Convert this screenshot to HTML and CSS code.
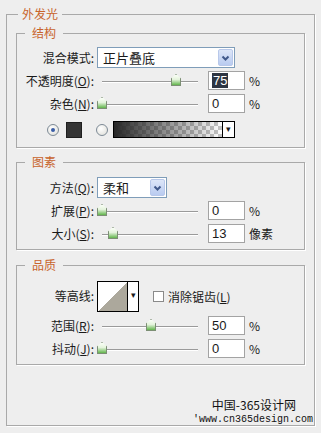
FILE: index.html
```html
<!DOCTYPE html>
<html lang="zh">
<head>
    <meta charset="UTF-8">
    <meta name="viewport" content="width=device-width, initial-scale=1.0">
    <title>外发光</title>
    <link rel="stylesheet" href="styles.css">
</head>
<body>
    <section class="outer">
        <h2 class="title">外发光</h2>

        <div class="group group-struct">
            <h3 class="title">结构</h3>
            <div class="row">
                <span class="label">混合模式:</span>
                <div class="select select-wide">
                    <span class="select-text">正片叠底</span>
                    <span class="select-btn">
                        <svg width="13" height="16" viewBox="0 0 13 16"><path d="M3.5 6.5 L6.5 9.5 L9.5 6.5" fill="none" stroke="#41598a" stroke-width="2"/></svg>
                    </span>
                </div>
            </div>
            <div class="row">
                <span class="label">不透明度(<u>O</u>):</span>
                <div class="slider">
                    <span class="track"></span>
                    <span class="thumb" style="left: 74px"></span>
                </div>
                <div class="num"><span class="sel">75</span></div>
                <span class="unit">%</span>
            </div>
            <div class="row">
                <span class="label">杂色(<u>N</u>):</span>
                <div class="slider">
                    <span class="track"></span>
                    <span class="thumb" style="left: 0px"></span>
                </div>
                <div class="num">0</div>
                <span class="unit">%</span>
            </div>
            <div class="row row-color">
                <span class="radio on"></span>
                <span class="swatch"></span>
                <span class="radio"></span>
                <div class="gradbox">
                    <span class="grad"></span>
                    <span class="drop">&#9662;</span>
                </div>
            </div>
        </div>

        <div class="group group-elem">
            <h3 class="title">图素</h3>
            <div class="row">
                <span class="label">方法(<u>Q</u>):</span>
                <div class="select select-short">
                    <span class="select-text">柔和</span>
                    <span class="select-btn">
                        <svg width="13" height="16" viewBox="0 0 13 16"><path d="M3.5 6.5 L6.5 9.5 L9.5 6.5" fill="none" stroke="#41598a" stroke-width="2"/></svg>
                    </span>
                </div>
            </div>
            <div class="row">
                <span class="label">扩展(<u>P</u>):</span>
                <div class="slider">
                    <span class="track"></span>
                    <span class="thumb" style="left: 0px"></span>
                </div>
                <div class="num">0</div>
                <span class="unit">%</span>
            </div>
            <div class="row">
                <span class="label">大小(<u>S</u>):</span>
                <div class="slider">
                    <span class="track"></span>
                    <span class="thumb" style="left: 11px"></span>
                </div>
                <div class="num">13</div>
                <span class="unit">像素</span>
            </div>
        </div>

        <div class="group group-quality">
            <h3 class="title">品质</h3>
            <div class="row row-contour">
                <span class="label">等高线:</span>
                <div class="contour">
                    <span class="curve"></span>
                    <span class="drop">&#9662;</span>
                </div>
                <span class="check"></span>
                <span class="check-text">消除锯齿(<u>L</u>)</span>
            </div>
            <div class="row row-gap">
                <span class="label">范围(<u>R</u>):</span>
                <div class="slider">
                    <span class="track"></span>
                    <span class="thumb" style="left: 49px"></span>
                </div>
                <div class="num">50</div>
                <span class="unit">%</span>
            </div>
            <div class="row">
                <span class="label">抖动(<u>J</u>):</span>
                <div class="slider">
                    <span class="track"></span>
                    <span class="thumb" style="left: 0px"></span>
                </div>
                <div class="num">0</div>
                <span class="unit">%</span>
            </div>
        </div>

        <div class="mark">
            <div class="mark-cn">中国-365设计网</div>
            <div class="mark-url">'www.cn365design.com</div>
        </div>
    </section>
</body>
</html>
```

FILE: styles.css
```css
body {
    margin: 0;
    background: #eeeeee;
    font-family: "Noto Sans CJK SC", sans-serif;
    font-size: 12px;
    color: #1a1a1a;
    width: 321px;
    height: 433px;
    overflow: hidden;
}

/* group boxes with the caption sitting on the top border */
.outer,
.group {
    border: 1px solid #a9a9a9;
    box-shadow: 1px 1px 0 #ffffff;
}

.outer {
    margin: 14px 6px 0;
    padding: 0 9px 0 11px;
}

.title {
    width: fit-content;
    margin: -8px 0 0;
    background: #eeeeee;
    color: #c8642c;
    font-size: 12px;
    font-weight: normal;
    line-height: 14px;
}

.outer > .title {
    padding: 0 4px;
}

.group > .title {
    padding: 0 7px;
}

.group {
    margin-left: -2px;
    padding-left: 8px;
}

.group-struct {
    margin-top: 12px;
    padding-top: 0;
    padding-bottom: 6px;
}

.group-struct > .title {
    margin-bottom: 6px;
}

.group-elem {
    margin-top: 14px;
    padding-bottom: 4px;
}

.group-elem > .title {
    margin-bottom: 7px;
}

.group-quality {
    margin-top: 15px;
    padding-bottom: 4px;
}

.group-quality > .title {
    margin-bottom: 8px;
}

.row {
    display: flex;
    align-items: center;
    height: 23px;
}

.label {
    flex: none;
    width: 69px;
    margin-right: 3px;
    text-align: right;
    line-height: 14px;
    white-space: nowrap;
}

u {
    text-decoration: underline;
    text-underline-offset: 1px;
}

/* drop-down lists */
.select {
    display: flex;
    align-items: center;
    height: 21px;
    box-sizing: border-box;
    border: 1px solid #7f9db9;
    background: #ffffff;
}

.select-wide {
    width: 138px;
}

.select-short {
    width: 70px;
}

.select-text {
    flex: 1;
    padding-left: 5px;
    font-size: 13px;
}

.select-btn {
    display: flex;
    align-items: center;
    justify-content: center;
    width: 15px;
    height: 17px;
    margin-right: 1px;
    box-sizing: border-box;
    border: 1px solid #b8c8ea;
    border-radius: 2px;
    background: linear-gradient(#dde6f8, #b9cbf0);
}

/* sliders */
.slider {
    position: relative;
    flex: none;
    display: flex;
    align-items: center;
    width: 104px;
    height: 23px;
    margin-right: 7px;
}

.track {
    display: block;
    width: 96px;
    height: 1px;
    margin-left: 5px;
    margin-top: 2px;
    background: #9a9a9a;
    box-shadow: 0 1px 0 #ffffff;
}

.thumb {
    position: absolute;
    top: 5px;
    width: 10px;
    height: 12px;
    background: linear-gradient(#fafff6 0%, #e4f3dc 45%, #62b54c 100%);
    border: 1px solid #7c8f74;
    box-sizing: border-box;
    clip-path: polygon(50% 0, 100% 38%, 100% 100%, 0 100%, 0 38%);
}

.num {
    flex: none;
    width: 37px;
    height: 19px;
    box-sizing: border-box;
    border: 1px solid #a3a3a3;
    background: #ffffff;
    padding-left: 3px;
    font-family: "Liberation Sans", sans-serif;
    font-size: 13px;
    line-height: 17px;
}

.sel {
    background: #2e3542;
    color: #ffffff;
    padding: 0 1px;
}

.unit {
    margin-left: 4px;
}

/* colour row */
.row-color {
    margin-top: 3px;
    padding-left: 22px;
}

.radio {
    flex: none;
    width: 12px;
    height: 12px;
    box-sizing: border-box;
    border: 1px solid #7d8a96;
    border-radius: 50%;
    background: radial-gradient(circle at 40% 35%, #ffffff, #dcdcd6);
    display: flex;
    align-items: center;
    justify-content: center;
}

.radio.on::after {
    content: "";
    width: 4px;
    height: 4px;
    border-radius: 50%;
    background: #3a5ea6;
}

.swatch {
    flex: none;
    width: 16px;
    height: 16px;
    box-sizing: border-box;
    margin: 0 14px 0 7px;
    border: 1px solid #1e1e1e;
    background: #353535;
}

.gradbox {
    display: flex;
    margin-left: 5px;
    height: 17px;
}

.grad {
    width: 110px;
    box-sizing: border-box;
    border: 1px solid #000000;
    background:
        linear-gradient(to right, rgba(40, 40, 40, 1), rgba(40, 40, 40, 0)),
        repeating-conic-gradient(#c4c4c4 0 25%, #ffffff 0 50%) 0 0 / 8px 8px;
}

.drop {
    width: 12px;
    box-sizing: border-box;
    border: 1px solid #000000;
    border-left: 0;
    background: #ffffff;
    font-size: 9px;
    line-height: 14px;
    text-align: center;
}

/* quality */
.row-contour {
    height: 32px;
}

.contour {
    display: flex;
    height: 31px;
}

.curve {
    width: 31px;
    box-sizing: border-box;
    border: 1px solid #000000;
    background: linear-gradient(to top left, #aca89c 50%, #ffffff 50%);
}

.contour .drop {
    width: 11px;
    line-height: 26px;
}

.check {
    flex: none;
    width: 11px;
    height: 11px;
    box-sizing: border-box;
    margin-left: 14px;
    border: 1px solid #8a8a8a;
    background: #ffffff;
}

.check-text {
    margin-left: 4px;
}

.row-gap {
    margin-top: 2px;
}

/* watermark */
.mark {
    margin: 33px -8px 0 0;
    text-align: right;
}

.mark-cn {
    font-size: 12px;
    line-height: 14px;
    padding-right: 17px;
    color: #111111;
}

.mark-url {
    margin-top: 3px;
    font-family: "Liberation Mono", monospace;
    font-size: 10px;
    line-height: 10px;
    color: #111111;
}
```
